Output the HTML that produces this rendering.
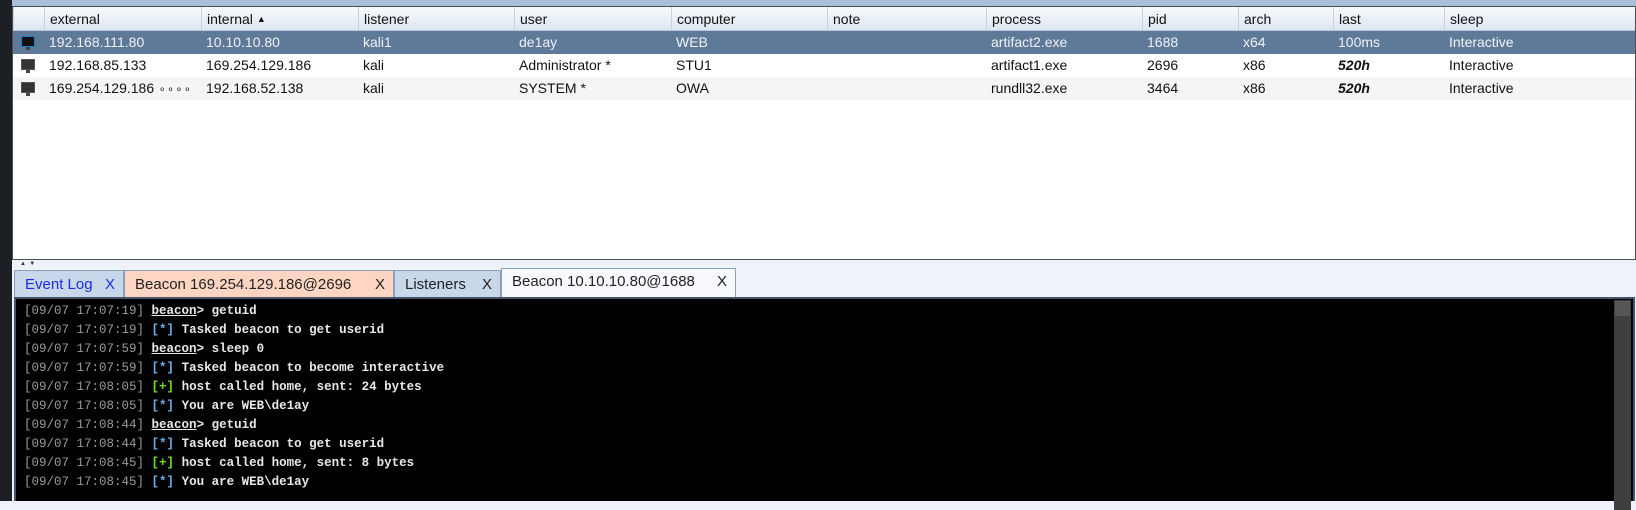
<!DOCTYPE html>
<html><head><meta charset="utf-8"><style>
*{margin:0;padding:0;box-sizing:border-box}
body{width:1636px;height:501px;overflow:hidden;background:#eef2f9;position:relative;font-family:"Liberation Sans",sans-serif}
.strip{position:absolute;left:0;top:0;width:12px;height:501px;background:#1c2024}
.top{position:absolute;left:12px;top:0;width:1624px;height:7px;background:#a7bfd9}
.tbl{position:absolute;left:12px;top:6px;width:1624px;height:254px;background:#fff;border:1px solid #4a4f55}
.hdr{position:absolute;left:0;top:0;height:24px;width:100%;background:linear-gradient(#f7f9fc,#dde6f1);border-bottom:1px solid #b8c6d6}
.c{position:absolute;font-size:14px;line-height:23px;padding-left:5px;white-space:nowrap;color:#111}
.hdr .c{border-left:1px solid #c5d1de;height:23px;line-height:24px}
.row{position:absolute;left:0;width:100%;height:23px}
.sel{background:#5f7a98}.sel .c{color:#eef2f7}
.alt{background:#f4f5f7}
.ic{position:absolute;left:8px;top:5px;width:14px;height:11px;background:#333;border:1px solid #555}
.ic:after{content:"";position:absolute;left:4px;top:10px;width:4px;height:3px;background:#444}
.tab{position:absolute;top:270px;height:28px;font-size:15px;line-height:27px;padding-left:10px;border:1px solid #8aa0b8;border-bottom:none;white-space:nowrap;color:#222}
.tab span{position:absolute;right:8px;top:0}
.con{position:absolute;left:14px;top:297px;width:1621px;height:204px;background:#000;border:2px solid #44546a;border-bottom:none}
.sb{position:absolute;right:2px;top:1px;width:17px;height:210px;background:#3f3f3f}
.sb:before{content:"";position:absolute;left:1px;top:1px;width:15px;height:15px;background:#555}
.lines{position:absolute;left:8px;top:3px;font-family:"Liberation Mono",monospace;font-weight:bold;font-size:12.5px;line-height:18.95px;color:#e8e8e8;white-space:pre}
.g{color:#9a9a9a;font-weight:normal}.b{color:#6aaee6}.gr{color:#6de021}.u{text-decoration:underline}
</style></head><body>
<div class="strip"></div>
<div class="top"></div>
<div class="tbl">
<div class="hdr">
<div class="c" style="left:0;width:32px"></div>
<div class="c" style="left:31px">external</div>
<div class="c" style="left:188px">internal <span style="font-size:9px;vertical-align:2px">&#9650;</span></div>
<div class="c" style="left:345px">listener</div>
<div class="c" style="left:501px">user</div>
<div class="c" style="left:658px">computer</div>
<div class="c" style="left:814px">note</div>
<div class="c" style="left:973px">process</div>
<div class="c" style="left:1129px">pid</div>
<div class="c" style="left:1225px">arch</div>
<div class="c" style="left:1320px">last</div>
<div class="c" style="left:1431px">sleep</div>
</div>
<div class="row sel" style="top:24px"><div class="ic" style="background:#111;border-color:#1a7fd0"></div>
<div class="c" style="left:31px">192.168.111.80</div><div class="c" style="left:188px">10.10.10.80</div><div class="c" style="left:345px">kali1</div><div class="c" style="left:501px">de1ay</div><div class="c" style="left:658px">WEB</div><div class="c" style="left:973px">artifact2.exe</div><div class="c" style="left:1129px">1688</div><div class="c" style="left:1225px">x64</div><div class="c" style="left:1320px">100ms</div><div class="c" style="left:1431px">Interactive</div></div>
<div class="row" style="top:47px"><div class="ic"></div>
<div class="c" style="left:31px">192.168.85.133</div><div class="c" style="left:188px">169.254.129.186</div><div class="c" style="left:345px">kali</div><div class="c" style="left:501px">Administrator *</div><div class="c" style="left:658px">STU1</div><div class="c" style="left:973px">artifact1.exe</div><div class="c" style="left:1129px">2696</div><div class="c" style="left:1225px">x86</div><div class="c" style="left:1320px;font-weight:bold;font-style:italic">520h</div><div class="c" style="left:1431px">Interactive</div></div>
<div class="row alt" style="top:70px"><div class="ic"></div>
<div class="c" style="left:31px">169.254.129.186 <span style="font-size:10px">&#9900;&#9900;&#9900;&#9900;</span></div><div class="c" style="left:188px">192.168.52.138</div><div class="c" style="left:345px">kali</div><div class="c" style="left:501px">SYSTEM *</div><div class="c" style="left:658px">OWA</div><div class="c" style="left:973px">rundll32.exe</div><div class="c" style="left:1129px">3464</div><div class="c" style="left:1225px">x86</div><div class="c" style="left:1320px;font-weight:bold;font-style:italic">520h</div><div class="c" style="left:1431px">Interactive</div></div>
</div>
<div style="position:absolute;left:20px;top:261px;font-size:6px;line-height:6px;color:#333">&#9650;&nbsp;&nbsp;&#9660;</div>
<div class="tab" style="left:14px;width:110px;background:#c8d8ea;color:#1b2de0">Event Log<span>X</span></div>
<div class="tab" style="left:124px;width:270px;background:#fdd5c2">Beacon 169.254.129.186@2696<span>X</span></div>
<div class="tab" style="left:394px;width:107px;background:#c8d8ea">Listeners<span>X</span></div>
<div class="tab" style="left:501px;width:235px;background:#f7f9fc;top:268px;height:30px;line-height:26px">Beacon 10.10.10.80@1688<span>X</span></div>
<div class="con"><div class="sb"></div>
<div class="lines"><span class="g">[09/07 17:07:19]</span> <span class="u">beacon</span>&gt; getuid
<span class="g">[09/07 17:07:19]</span> <span class="b">[*]</span> Tasked beacon to get userid
<span class="g">[09/07 17:07:59]</span> <span class="u">beacon</span>&gt; sleep 0
<span class="g">[09/07 17:07:59]</span> <span class="b">[*]</span> Tasked beacon to become interactive
<span class="g">[09/07 17:08:05]</span> <span class="gr">[+]</span> host called home, sent: 24 bytes
<span class="g">[09/07 17:08:05]</span> <span class="b">[*]</span> You are WEB\de1ay
<span class="g">[09/07 17:08:44]</span> <span class="u">beacon</span>&gt; getuid
<span class="g">[09/07 17:08:44]</span> <span class="b">[*]</span> Tasked beacon to get userid
<span class="g">[09/07 17:08:45]</span> <span class="gr">[+]</span> host called home, sent: 8 bytes
<span class="g">[09/07 17:08:45]</span> <span class="b">[*]</span> You are WEB\de1ay</div>
</div>
</body></html>
